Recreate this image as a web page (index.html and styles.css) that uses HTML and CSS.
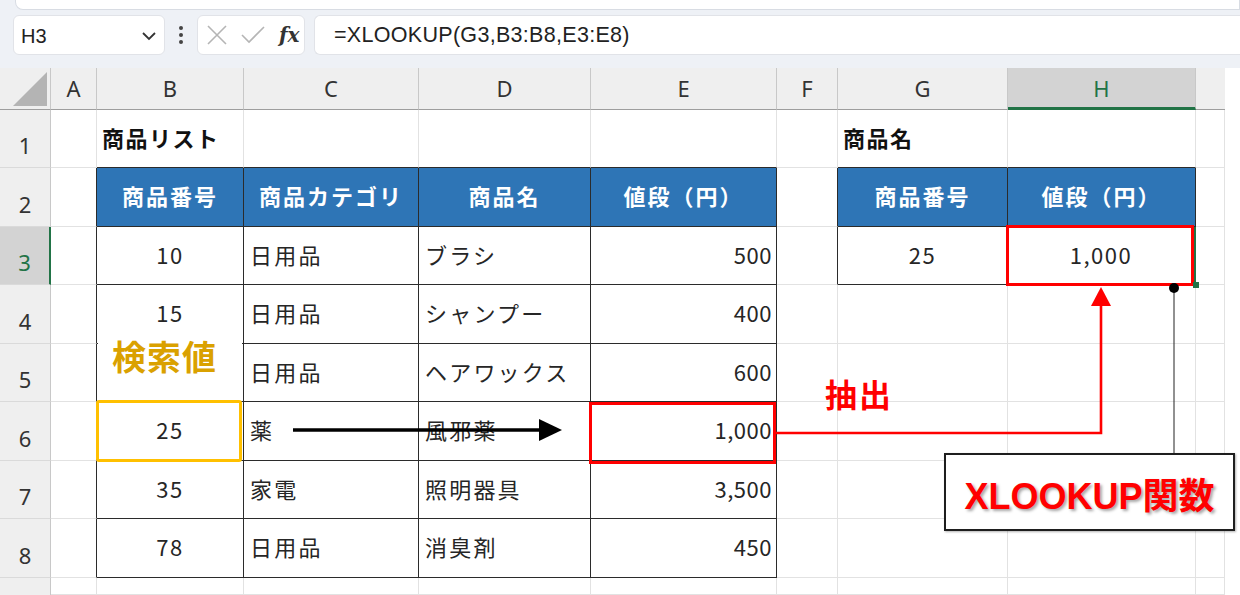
FILE: index.html
```html
<!DOCTYPE html>
<html lang="ja">
<head>
<meta charset="utf-8">
<title>XLOOKUP</title>
<link rel="stylesheet" href="styles.css">
</head>
<body>
<div class="page">
  <div class="top">
    <div class="strip"></div>
    <div class="fbar">
      <div class="namebox"><span class="nb-text">H3</span>
        <svg class="chev" width="16" height="10" viewBox="0 0 16 10"><path d="M2 2 L8 8 L14 2" fill="none" stroke="#333" stroke-width="1.8"/></svg>
      </div>
      <div class="vdots"><span></span><span></span><span></span></div>
      <div class="fxbox">
        <svg width="22" height="22" viewBox="0 0 22 22"><path d="M2 2 L20 20 M20 2 L2 20" stroke="#b5b5b5" stroke-width="1.6"/></svg>
        <svg width="26" height="22" viewBox="0 0 26 22"><path d="M2 11 L9 18 L24 3" fill="none" stroke="#b5b5b5" stroke-width="1.6"/></svg>
        <span class="fx">fx</span>
      </div>
      <div class="formula">=XLOOKUP(G3,B3:B8,E3:E8)</div>
    </div>
  </div>

  <div class="sheet">
    <!-- header row -->
    <div class="corner"><div class="tri"></div></div>
    <div class="ch">A</div><div class="ch">B</div><div class="ch">C</div><div class="ch">D</div><div class="ch">E</div><div class="ch">F</div><div class="ch">G</div><div class="ch ch-sel">H</div><div class="ch ch-end"></div>

    <!-- row 1 -->
    <div class="rh">1</div>
    <div class="c"></div><div class="c db title">商品リスト</div><div class="c db"></div><div class="c db"></div><div class="c db"></div><div class="c"></div><div class="c db title">商品名</div><div class="c db"></div><div class="c"></div>

    <!-- row 2 -->
    <div class="rh">2</div>
    <div class="c dr"></div><div class="c t th">商品番号</div><div class="c t th">商品カテゴリ</div><div class="c t th">商品名</div><div class="c t th">値段（円）</div><div class="c dr"></div><div class="c t th">商品番号</div><div class="c t th">値段（円）</div><div class="c"></div>

    <!-- row 3 -->
    <div class="rh rh-sel">3</div>
    <div class="c dr"></div><div class="c t ctr">10</div><div class="c t lft">日用品</div><div class="c t lft">ブラシ</div><div class="c t rgt">500</div><div class="c dr"></div><div class="c t ctr">25</div><div class="c t ctr sel">1,000</div><div class="c"></div>

    <!-- row 4 -->
    <div class="rh">4</div>
    <div class="c dr"></div><div class="c t ctr">15</div><div class="c t lft">日用品</div><div class="c t lft">シャンプー</div><div class="c t rgt">400</div><div class="c"></div><div class="c"></div><div class="c"></div><div class="c"></div>

    <!-- row 5 -->
    <div class="rh">5</div>
    <div class="c dr"></div><div class="c t ctr"></div><div class="c t lft">日用品</div><div class="c t lft">ヘアワックス</div><div class="c t rgt">600</div><div class="c"></div><div class="c"></div><div class="c"></div><div class="c"></div>

    <!-- row 6 -->
    <div class="rh">6</div>
    <div class="c dr"></div><div class="c t ctr">25</div><div class="c t lft">薬</div><div class="c t lft">風邪薬</div><div class="c t rgt">1,000</div><div class="c"></div><div class="c"></div><div class="c"></div><div class="c"></div>

    <!-- row 7 -->
    <div class="rh">7</div>
    <div class="c dr"></div><div class="c t ctr">35</div><div class="c t lft">家電</div><div class="c t lft">照明器具</div><div class="c t rgt">3,500</div><div class="c"></div><div class="c"></div><div class="c"></div><div class="c"></div>

    <!-- row 8 -->
    <div class="rh">8</div>
    <div class="c dr"></div><div class="c t ctr">78</div><div class="c t lft">日用品</div><div class="c t lft">消臭剤</div><div class="c t rgt">450</div><div class="c"></div><div class="c"></div><div class="c"></div><div class="c"></div>

    <!-- row 9 -->
    <div class="rh rh-last"></div>
    <div class="c"></div><div class="c"></div><div class="c"></div><div class="c"></div><div class="c"></div><div class="c"></div><div class="c"></div><div class="c"></div><div class="c"></div>
  </div>

  <!-- annotations -->
  <div class="lbl-search">検索値</div>
  <div class="box-yellow"></div>
  <div class="box-red box-e6"></div>
  <div class="box-red box-h3"></div>
  <div class="handle"></div>
  <div class="lbl-extract">抽出</div>
  <svg class="overlay" width="1240" height="595" viewBox="0 0 1240 595">
    <line x1="293" y1="430" x2="542" y2="430" stroke="#000" stroke-width="3.5"/>
    <polygon points="539,419 562,430 539,441" fill="#000"/>
    <polyline points="776,433 1101,433 1101,303" fill="none" stroke="#ff0000" stroke-width="2.6"/>
    <polygon points="1091,306 1101,287 1111,306" fill="#ff0000"/>
    <line x1="1174" y1="288" x2="1174" y2="454" stroke="#222" stroke-width="1"/>
    <circle cx="1174" cy="288" r="5" fill="#000"/>
  </svg>
  <div class="callout">XLOOKUP関数</div>
</div>
</body>
</html>
```

FILE: styles.css
```css
* { box-sizing: border-box; }
html, body { margin: 0; padding: 0; }
body {
  width: 1240px;
  height: 595px;
  overflow: hidden;
  background: #ffffff;
  font-family: "Noto Sans CJK JP", "Noto Sans", sans-serif;
  color: #262626;
}
.page { position: relative; width: 1240px; height: 595px; }

/* ---------- top / formula bar ---------- */
.top {
  height: 68px;
  background: #eef1f6;
}
.strip {
  height: 10px;
  margin-left: 15px;
  background: #ffffff;
  border: 1px solid #d8dce3;
  border-top: none;
  border-radius: 0 0 0 8px;
}
.fbar {
  display: flex;
  align-items: center;
  height: 48px;
  padding-top: 5px;
  padding-left: 13px;
  padding-bottom: 3px;
}
.namebox {
  width: 152px;
  height: 40px;
  background: #fff;
  border: 1px solid #e1e3e8;
  border-radius: 6px;
  display: flex;
  align-items: center;
  justify-content: space-between;
  padding: 0 7px 0 7px;
}
.nb-text {
  font-family: "Liberation Sans", sans-serif;
  font-size: 20px;
  color: #222;
  padding-top: 3px;
}
.chev { margin-top: 2px; }
.vdots {
  width: 32px;
  display: flex;
  flex-direction: column;
  align-items: center;
  gap: 3px;
}
.vdots span {
  width: 4px; height: 4px;
  border-radius: 50%;
  background: #444;
}
.fxbox {
  width: 108px;
  height: 40px;
  background: #fff;
  border: 1px solid #e1e3e8;
  border-radius: 6px;
  display: flex;
  align-items: center;
  gap: 12px;
  padding-left: 8px;
}
.fx {
  font-family: "DejaVu Serif", "Liberation Serif", serif;
  font-style: italic;
  font-weight: bold;
  font-size: 20px;
  color: #333;
  margin-left: 1px;
}
.formula {
  flex: 1;
  margin-left: 9px;
  height: 40px;
  background: #fff;
  border: 1px solid #e1e3e8;
  border-right: none;
  border-radius: 6px 0 0 6px;
  font-family: "Liberation Sans", sans-serif;
  font-size: 21.5px;
  letter-spacing: 0.3px;
  color: #222;
  display: flex;
  align-items: center;
  padding-left: 19px;
  padding-top: 1px;
}

/* ---------- sheet grid ---------- */
.sheet {
  display: grid;
  grid-template-columns: 51px 46px 147px 175px 172px 186px 61px 170px 188px 29px;
  grid-template-rows: 42px 58px 59px 58px 59px 58px 59px 58px 59px 17px;
  width: 1225px;
}
.corner {
  background: #efefef;
  border-right: 1px solid #c8c8c8;
  border-bottom: 1px solid #9e9e9e;
  position: relative;
}
.tri {
  position: absolute;
  left: 13px; top: 4px;
  width: 34px; height: 34px;
  background: #b4b4b4;
  clip-path: polygon(100% 0, 100% 100%, 0 100%);
}
.ch {
  background: #efefef;
  border-right: 1px solid #c8c8c8;
  border-bottom: 1px solid #9e9e9e;
  display: flex;
  align-items: center;
  justify-content: center;
  font-family: "Noto Sans", sans-serif;
  font-size: 22px;
  color: #333;
  padding-bottom: 2px;
}
.ch-sel {
  background: #d3d3d3;
  color: #217346;
  border-bottom: 3px solid #217346;
  padding-bottom: 0;
}
.ch-end { border-right: none; }
.rh {
  background: #efefef;
  border-right: 1px solid #c8c8c8;
  border-bottom: 1px solid #dadada;
  display: flex;
  align-items: center;
  justify-content: center;
  font-family: "Noto Sans", sans-serif;
  font-size: 22px;
  color: #333;
  padding-top: 13px;
}
.rh-sel {
  background: #d3d3d3;
  color: #217346;
  border-right: 2px solid #217346;
}
.rh-last { border-bottom: none; }
.c {
  border-right: 1px solid #e2e2e2;
  border-bottom: 1px solid #e2e2e2;
  display: flex;
  align-items: center;
  font-size: 22px;
  letter-spacing: 1.5px;
  white-space: nowrap;
  color: #262626;
  padding-bottom: 4px;
}
.db { border-bottom-color: #2b2b2b; }
.dr { border-right-color: #2b2b2b; }
.t {
  border-right-color: #2b2b2b;
  border-bottom-color: #2b2b2b;
}
.th {
  background: #2e75b6;
  color: #ffffff;
  font-weight: bold;
  justify-content: center;
  letter-spacing: 2px;
}
.title {
  font-weight: bold;
  color: #111;
  padding-left: 5px;
  letter-spacing: 1.5px;
}
.ctr { justify-content: center; }
.lft { padding-left: 6px; letter-spacing: 2.2px; }
.rgt { justify-content: flex-end; padding-right: 4px; letter-spacing: 0.5px; }
.sel { border-right: 2px solid #217346; }

/* ---------- annotations ---------- */
.lbl-search {
  position: absolute;
  left: 98px; top: 330px;
  width: 144px; height: 62px;
  background: #fff;
  color: #daa100;
  font-weight: bold;
  font-size: 34px;
  letter-spacing: 1px;
  padding-left: 14px;
  line-height: 52px;
}
.box-yellow {
  position: absolute;
  left: 96px; top: 400px;
  width: 146px; height: 62px;
  border: 3px solid #ffc000;
  border-radius: 3px;
}
.box-red {
  position: absolute;
  border: 3px solid #ff0000;
}
.box-e6 { left: 589px; top: 402px; width: 187px; height: 62px; }
.box-h3 { left: 1006px; top: 225px; width: 188px; height: 61px; }
.handle {
  position: absolute;
  left: 1193px; top: 282px;
  width: 6px; height: 6px;
  background: #217346;
}
.lbl-extract {
  position: absolute;
  left: 825px; top: 370px;
  color: #ff0000;
  font-weight: bold;
  font-size: 32px;
  letter-spacing: 2px;
}
.overlay {
  position: absolute;
  left: 0; top: 0;
  pointer-events: none;
}
.callout {
  position: absolute;
  left: 944px; top: 453px;
  width: 291px; height: 78px;
  background: #fff;
  border: 2px solid #1e1e1e;
  box-shadow: 1px 1px 2px rgba(0,0,0,0.3);
  display: flex;
  align-items: center;
  justify-content: center;
  font-family: "Liberation Sans", "Noto Sans CJK JP", sans-serif;
  font-weight: bold;
  font-size: 36px;
  color: #ff0000;
  text-shadow: 2px 2px 3px rgba(0,0,0,0.35);
  padding-top: 2px;
}
```
